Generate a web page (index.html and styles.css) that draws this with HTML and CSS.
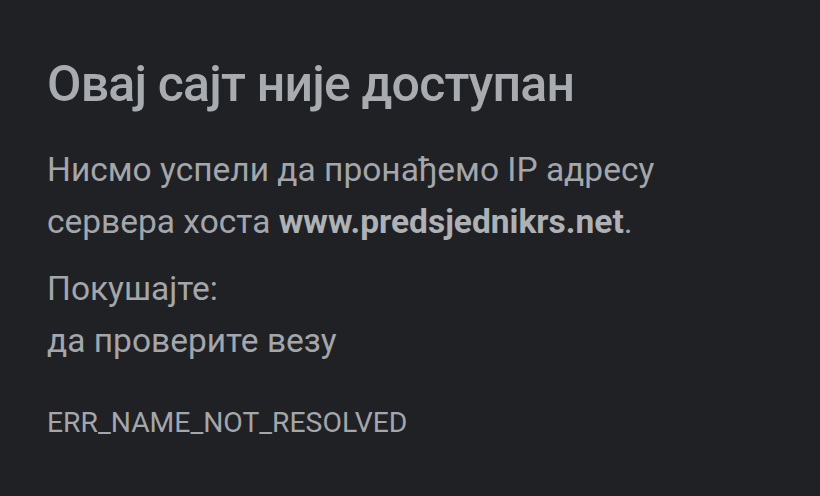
FILE: index.html
```html
<!DOCTYPE html>
<html lang="sr">
<head>
	<meta charset="utf-8">
	<title>Овај сајт није доступан</title>
	<link rel="stylesheet" href="styles.css">
</head>
<body>
	<div class="main">
		<h1 class="title">Овај сајт није доступан</h1>
		<p class="text">Нисмо успели да пронађемо IP адресу<br>сервера хоста <b>www.predsjednikrs.net</b>.</p>
		<p class="text try">Покушајте:<br>да проверите везу</p>
		<div class="code">ERR_NAME_NOT_RESOLVED</div>
	</div>
</body>
</html>
```

FILE: styles.css
```css
html, body {
	margin: 0;
	height: 100%;
}

body {
	background-color: #202124;
	font-family: Roboto, "Noto Sans", sans-serif;
	color: #a3a6ab;
}

.main {
	padding: 54px 0 0 47px;
}

.title {
	margin: 0;
	font-size: 50px;
	line-height: 60px;
	font-weight: 500;
	letter-spacing: -0.8px;
	color: #a8abb0;
}

.text {
	margin: 30px 0 0 0;
	font-size: 33.5px;
	line-height: 52px;
}

.text b {
	font-weight: 700;
	color: #aeb1b5;
}

.text.try {
	margin-top: 15px;
}

.code {
	margin-top: 36px;
	font-size: 28.3px;
	line-height: 40px;
}
```
